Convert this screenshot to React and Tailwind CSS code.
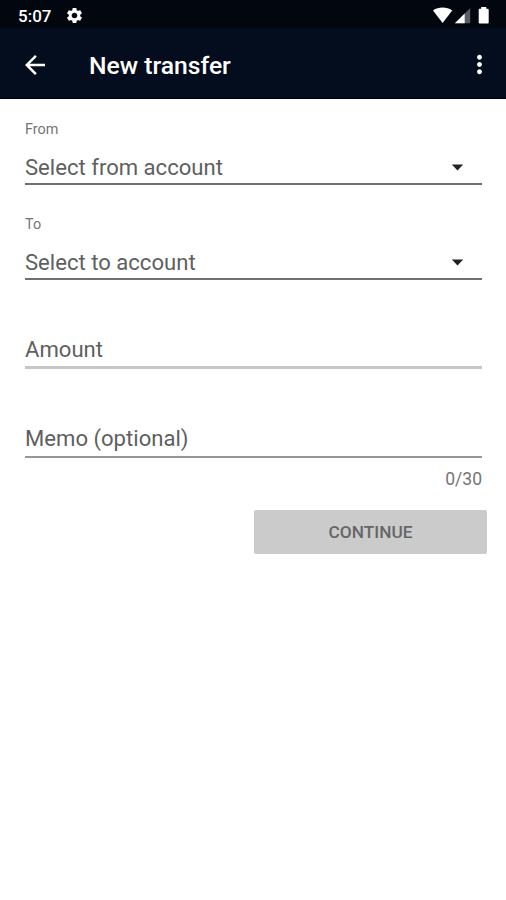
import { MdArrowBack, MdMoreVert, MdSettings } from "react-icons/md";

function StatusBar() {
  return (
    <div className="flex h-[28px] items-start bg-[#01060f] pl-[18px] pr-[16px] text-white">
      <span className="mt-[4px] w-[47px] text-[17px] font-medium leading-6">
        5:07
      </span>
      <MdSettings size={19} className="mt-[6px]" />
      <svg
        className="ml-auto mt-[7px]"
        width="58"
        height="17"
        viewBox="0 0 58 17"
        fill="currentColor"
      >
        <path d="M1 3.4C6.5-0.3 14.7-0.3 20.2 3.4L10.6 16z" />
        <path d="M38.2 1v15.3H22.9z" opacity="0.35" />
        <path d="M32.7 6.5v9.8h-9.8z" />
        <path d="M49.2 0h5v1.8h1.5q1 0 1 1v12.6q0 1-1 1h-8q-1 0-1-1V2.8q0-1 1-1h1.5z" />
      </svg>
    </div>
  );
}

function AppBar() {
  return (
    <header className="flex h-[71px] items-center border-b border-black bg-[#040d1d] pl-[20px] pr-[12px] pt-[3px] text-white">
      <button type="button" aria-label="Back">
        <MdArrowBack size={30} />
      </button>
      <h1 className="ml-[39px] pt-[2px] text-[24.7px] font-medium leading-8">
        New transfer
      </h1>
      <button type="button" className="ml-auto" aria-label="More options">
        <MdMoreVert size={29} />
      </button>
    </header>
  );
}

function SelectField({ label, value }) {
  return (
    <div className="h-[95px]">
      <div className="h-[25px] pt-[1px] text-[14.4px] leading-5 text-[#757575]">
        {label}
      </div>
      <button
        type="button"
        className="flex h-[41px] w-full items-center justify-between border-b-2 border-[#707070] pr-[18px] pt-[7px] text-left text-[22.1px] text-[#5f5f5f]"
      >
        <span className="pt-[2px]">{value}</span>
        <svg width="13" height="7" viewBox="0 0 13 7" fill="#222">
          <path d="M0.8 0.5h11.4L6.5 6.5z" />
        </svg>
      </button>
    </div>
  );
}

function App() {
  return (
    <div className="min-h-screen bg-white font-['Roboto',sans-serif]">
      <StatusBar />
      <AppBar />
      <form className="flex flex-col pl-[25px] pr-[24px] pt-[20px]">
        <SelectField label="From" value="Select from account" />
        <SelectField label="To" value="Select to account" />
        <div className="mt-[24px] h-[36px] border-b-3 border-[#c6c6c6] text-[22.1px] leading-8 text-[#5f5f5f]">
          Amount
        </div>
        <div className="mt-[53px] h-[36px] border-b-2 border-[#969696] text-[22.1px] leading-8 text-[#5f5f5f]">
          Memo (optional)
        </div>
        <div className="mt-[9px] text-right text-[17.5px] leading-6 text-[#757575]">
          0/30
        </div>
        <button
          type="button"
          className="-mr-[5px] mt-[19px] h-[44px] w-[233px] self-end rounded-[2px] bg-[#cbcbcb] pt-[1px] text-[17.3px] font-medium text-[#666]"
        >
          CONTINUE
        </button>
      </form>
    </div>
  );
}

export default App;
